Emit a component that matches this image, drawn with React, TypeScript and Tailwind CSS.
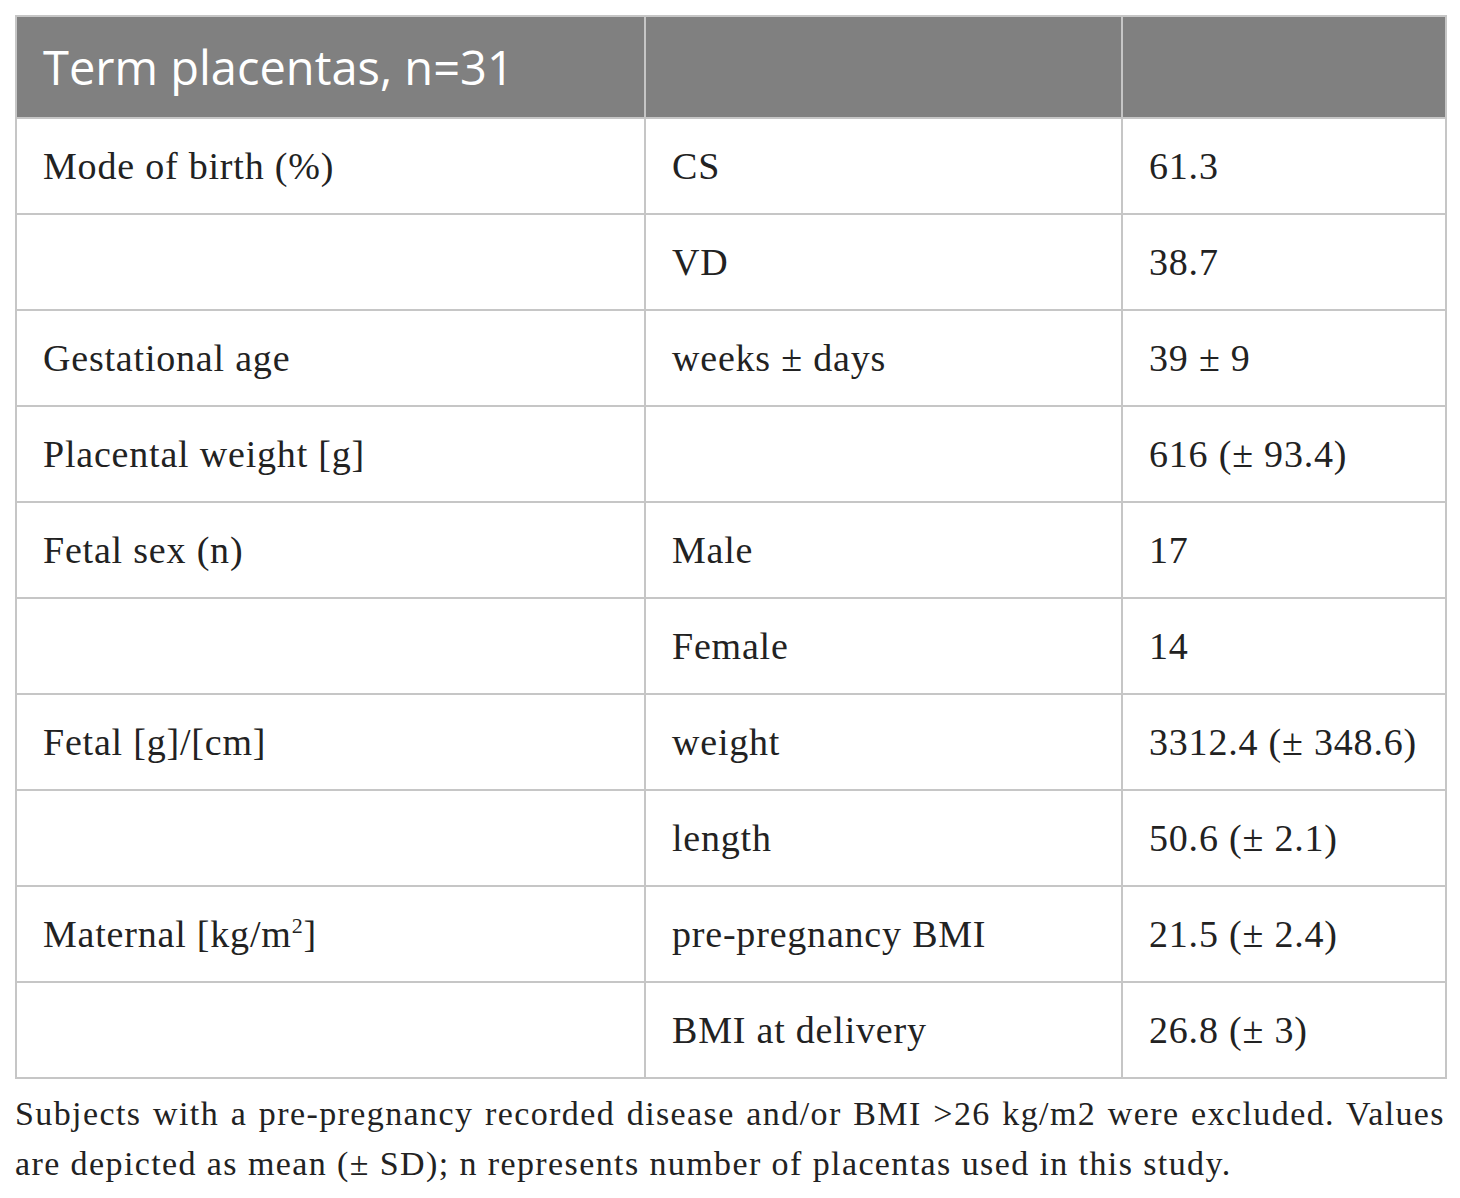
const rows: [string, string, string][] = [
  ['Mode of birth (%)', 'CS', '61.3'],
  ['', 'VD', '38.7'],
  ['Gestational age', 'weeks ± days', '39 ± 9'],
  ['Placental weight [g]', '', '616 (± 93.4)'],
  ['Fetal sex (n)', 'Male', '17'],
  ['', 'Female', '14'],
  ['Fetal [g]/[cm]', 'weight', '3312.4 (± 348.6)'],
  ['', 'length', '50.6 (± 2.1)'],
  ['Maternal', 'pre-pregnancy BMI', '21.5 (± 2.4)'],
  ['', 'BMI at delivery', '26.8 (± 3)'],
]

export default function App() {
  return (
    <div className="min-h-screen bg-white px-[15px] pt-[15px] text-[#222]">
      <table className="w-[1430px] table-fixed border-collapse">
        <colgroup>
          <col className="w-[629px]" />
          <col className="w-[477px]" />
          <col className="w-[324px]" />
        </colgroup>
        <thead>
          <tr className="h-[102px] bg-[#808080]">
            <th className="border-2 border-[#c6c6c6] pl-[26px] text-left font-['Open_Sans',sans-serif] text-[47px] font-normal text-white">
              Term placentas, n=31
            </th>
            <th className="border-2 border-[#c6c6c6]" />
            <th className="border-2 border-[#c6c6c6]" />
          </tr>
        </thead>
        <tbody className="font-['Liberation_Serif',serif] text-[38px] tracking-[0.8px]">
          {rows.map((r, i) => (
            <tr key={i} className="h-[96px]">
              <td className="border-2 border-[#c6c6c6] pl-[26px]">
                {r[0] === 'Maternal' ? (
                  <>
                    Maternal [kg/m<sup className="-top-[14px] text-[22px]">2</sup>]
                  </>
                ) : (
                  r[0]
                )}
              </td>
              <td className="border-2 border-[#c6c6c6] pl-[26px]">{r[1]}</td>
              <td className="border-2 border-[#c6c6c6] pl-[26px]">{r[2]}</td>
            </tr>
          ))}
        </tbody>
      </table>
      <p className="mt-[10px] w-[1430px] text-justify font-['Liberation_Serif',serif] text-[34px] leading-[50px] tracking-[1.4px]">
        Subjects with a pre-pregnancy recorded disease and/or BMI &gt;26 kg/m2 were excluded. Values are depicted as mean (± SD); n represents number of placentas used in this study.
      </p>
    </div>
  )
}
